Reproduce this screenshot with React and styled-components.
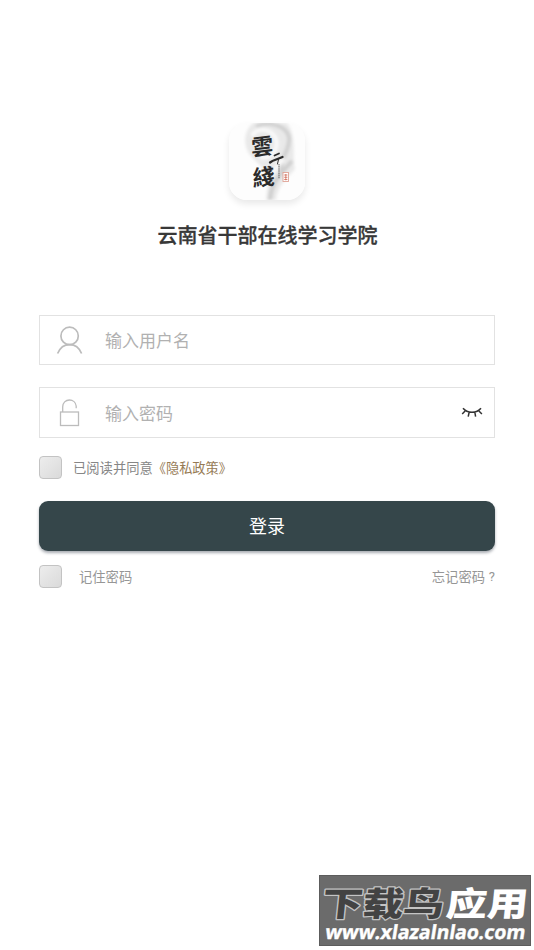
import React, { useState } from "react";
import styled, { createGlobalStyle } from "styled-components";

const GlobalStyle = createGlobalStyle`
  * {
    box-sizing: border-box;
  }

  body {
    margin: 0;
    background-color: #fff;
    font-family: "Noto Sans CJK SC", sans-serif;
  }
`;

const Page = styled.main`
  position: relative;
  display: flex;
  flex-direction: column;
  height: 950px;
  padding: 123px 39px 0;
`;

const Logo = styled.div`
  align-self: center;
  width: 76px;
  height: 77px;
  border-radius: 18px;
  overflow: hidden;
  box-shadow: 0 4px 7px rgba(0, 0, 0, 0.09);

  svg {
    display: block;
  }
`;

const Title = styled.h1`
  margin: 20px 0 0;
  padding-left: 1px;
  color: #383838;
  font-size: 20px;
  font-weight: 500;
  line-height: 30px;
  text-align: center;
  -webkit-text-stroke: 0.3px #383838;
`;

const LoginForm = styled.form`
  display: flex;
  flex-direction: column;
  margin-top: 65px;
`;

const Field = styled.label`
  display: flex;
  align-items: center;
  height: ${props => props.$height}px;
  margin-bottom: ${props => props.$gap}px;
  padding: 0 11px 0 16px;
  border: 1px solid #e2e2e2;
`;

const Input = styled.input`
  flex: 1;
  min-width: 0;
  margin-left: 22px;
  padding: 0;
  border: 0;
  outline: 0;
  background: transparent;
  color: #333;
  font-family: inherit;
  font-size: 17px;
  line-height: 26px;

  &::placeholder {
    color: #b1b1b1;
    opacity: 1;
  }
`;

const EyeButton = styled.button`
  display: flex;
  padding: 0;
  border: 0;
  background: none;
`;

const Row = styled.div`
  display: flex;
  align-items: center;
  height: 23px;
  color: ${props => props.$color};
  font-size: 13.3px;
  line-height: 20px;
`;

const Checkbox = styled.input`
  appearance: none;
  width: 23px;
  height: 23px;
  margin: 0 ${props => props.$gap}px 0 0;
  border: 1px solid #c3c3c3;
  border-radius: 4px;
  background: linear-gradient(135deg, #ededed, #dadada);
`;

const PolicyLink = styled.span`
  color: #967a54;
  font-size: 13.2px;
`;

const Submit = styled.button`
  height: 50px;
  margin: 22px 0 14px;
  padding: 0 0 2px;
  border: 0;
  border-radius: 9px;
  color: #fff;
  background-color: #35464a;
  box-shadow: 0 2px 3px rgba(40, 50, 65, 0.4);
  font-family: inherit;
  font-size: 18px;
  cursor: pointer;
`;

const Forgot = styled.span`
  display: flex;
  margin-left: auto;
`;

const QuestionMark = styled.span`
  width: 10px;
  font-family: Roboto, sans-serif;
  font-size: 13px;
  text-align: right;
`;

const Watermark = styled.div`
  position: absolute;
  right: 3px;
  bottom: 4px;
  width: 212px;
  height: 71px;
  border: 1px solid #5c5c5c;
  background-color: #6b6b6b;

  svg {
    display: block;
    overflow: visible;
  }
`;

const LogoArt = () => (
  <svg width="76" height="77" viewBox="0 0 76 77">
    <defs>
      <filter id="mist" x="-20%" y="-20%" width="140%" height="140%">
        <feGaussianBlur stdDeviation="1.5" />
      </filter>
    </defs>
    <rect width="76" height="77" fill="#fdfdfd" />
    <g filter="url(#mist)">
      <path
        d="M24 0C13 10 15 25 22 33C30 42 38 46 39 58L37 77H47C48 64 58 55 66 46C63 33 68 13 58 0Z"
        fill="#e9e9e9"
      />
      <path d="M27 3C40 -2 57 2 60 14C62 27 49 37 53 48" fill="none" stroke="#d0d0d0" strokeWidth="4" />
      <path d="M23 13C29 3 43 6 47 16C50 26 42 37 31 34" fill="none" stroke="#fafafa" strokeWidth="4" />
      <path d="M63 38C53 49 42 59 41 77" fill="none" stroke="#cecece" strokeWidth="4" />
      <path d="M55 36C48 41 46 50 39 54" fill="none" stroke="#fafafa" strokeWidth="4" />
    </g>
    <g fill="#2b2b2b" fontFamily="'Noto Sans CJK TC', sans-serif" fontWeight="700">
      <text transform="translate(22.5 33) rotate(-7) skewX(-5)" fontSize="22">雲</text>
      <text transform="translate(24 63.5) rotate(-7) skewX(-5)" fontSize="22">綫</text>
    </g>
    <g fill="none" stroke="#2b2b2b" strokeLinecap="round">
      <path d="M45.5 32.5L50 30.5" strokeWidth="1.8" />
      <path d="M41 39.5C44 37 48 36.5 53.5 34" strokeWidth="2.3" />
      <path d="M49.5 36.5L48.5 41" strokeWidth="1" />
    </g>
    <path d="M50 41V56" stroke="#7c7c7c" strokeWidth="1.2" strokeDasharray="1.5 0.6" />
    <rect x="54" y="49.5" width="5.5" height="9" fill="#fff" stroke="#dfa396" strokeWidth="0.9" />
    <path d="M55.2 52H58.4M55.2 54.3H58.4M56.8 51V57.3M55.2 56.5H58.4" stroke="#cf6c59" strokeWidth="0.8" />
  </svg>
);

const UserIcon = () => (
  <svg width="27" height="30" viewBox="0 0 27 30" fill="none" stroke="#bcbcbc" strokeWidth="1.7">
    <circle cx="13.6" cy="10.9" r="8.7" />
    <path d="M1.6 28.5C3.9 22.9 8.3 19.6 13.6 19.6S23.3 22.9 25.6 28.5" />
  </svg>
);

const LockIcon = () => (
  <svg width="27" height="30" viewBox="0 0 27 30" fill="none" stroke="#bcbcbc" strokeWidth="1.3">
    <rect x="4.5" y="14" width="18" height="13.5" />
    <path d="M6.7 14V8.7C6.7 4.7 9.7 2 13.4 2C17 2 19.8 4.4 20.2 8V10.2" />
  </svg>
);

const ClosedEyeIcon = () => (
  <svg width="22" height="12" viewBox="0 0 22 12" fill="none" stroke="#333" strokeWidth="1.5">
    <path d="M2 1.3C6.3 6.6 15.7 6.6 20 1.3M4.1 4L1.2 7M17.9 4L20.9 7M8.1 5.5L7.2 9.7M13.9 5.5L14.6 9.7" />
  </svg>
);

const WatermarkText = () => (
  <svg width="210" height="69" viewBox="0 0 210 69">
    <g
      fontFamily="'Noto Sans CJK SC', sans-serif"
      fontWeight="900"
      fontSize="39"
      strokeLinejoin="round"
      paintOrder="stroke"
    >
      <text
        transform="translate(1 39.5) skewX(-6) scale(1 0.86)"
        textLength="122"
        lengthAdjust="spacingAndGlyphs"
        fill="#434343"
        stroke="#c4c4c4"
        strokeWidth="2.8"
      >
        下载鸟
      </text>
      <text
        transform="translate(125 39.5) skewX(-6) scale(1 0.86)"
        textLength="82"
        lengthAdjust="spacingAndGlyphs"
        fill="#fff"
      >
        应用
      </text>
    </g>
    <text
      transform="translate(4.5 63) skewX(-9)"
      textLength="200"
      lengthAdjust="spacingAndGlyphs"
      fill="#fff"
      stroke="#fff"
      strokeWidth="0.4"
      fontFamily="'Open Sans', sans-serif"
      fontWeight="700"
      fontSize="19.5"
    >
      www.xlazalnlao.com
    </text>
  </svg>
);

const App = () => {
  const [visible, setVisible] = useState(false);

  return (
    <Page>
      <GlobalStyle />
      <Logo>
        <LogoArt />
      </Logo>
      <Title>云南省干部在线学习学院</Title>
      <LoginForm onSubmit={e => e.preventDefault()}>
        <Field $height={50} $gap={22}>
          <UserIcon />
          <Input name="username" placeholder="输入用户名" />
        </Field>
        <Field $height={51} $gap={18}>
          <LockIcon />
          <Input name="password" type={visible ? "text" : "password"} placeholder="输入密码" />
          <EyeButton type="button" onClick={() => setVisible(!visible)}>
            <ClosedEyeIcon />
          </EyeButton>
        </Field>
        <Row $color="#868686">
          <Checkbox type="checkbox" $gap={11} />
          已阅读并同意<PolicyLink>《隐私政策》</PolicyLink>
        </Row>
        <Submit>登录</Submit>
        <Row $color="#969696">
          <Checkbox type="checkbox" $gap={17} />
          记住密码
          <Forgot>
            忘记密码<QuestionMark>?</QuestionMark>
          </Forgot>
        </Row>
      </LoginForm>
      <Watermark>
        <WatermarkText />
      </Watermark>
    </Page>
  );
};

export default App;
